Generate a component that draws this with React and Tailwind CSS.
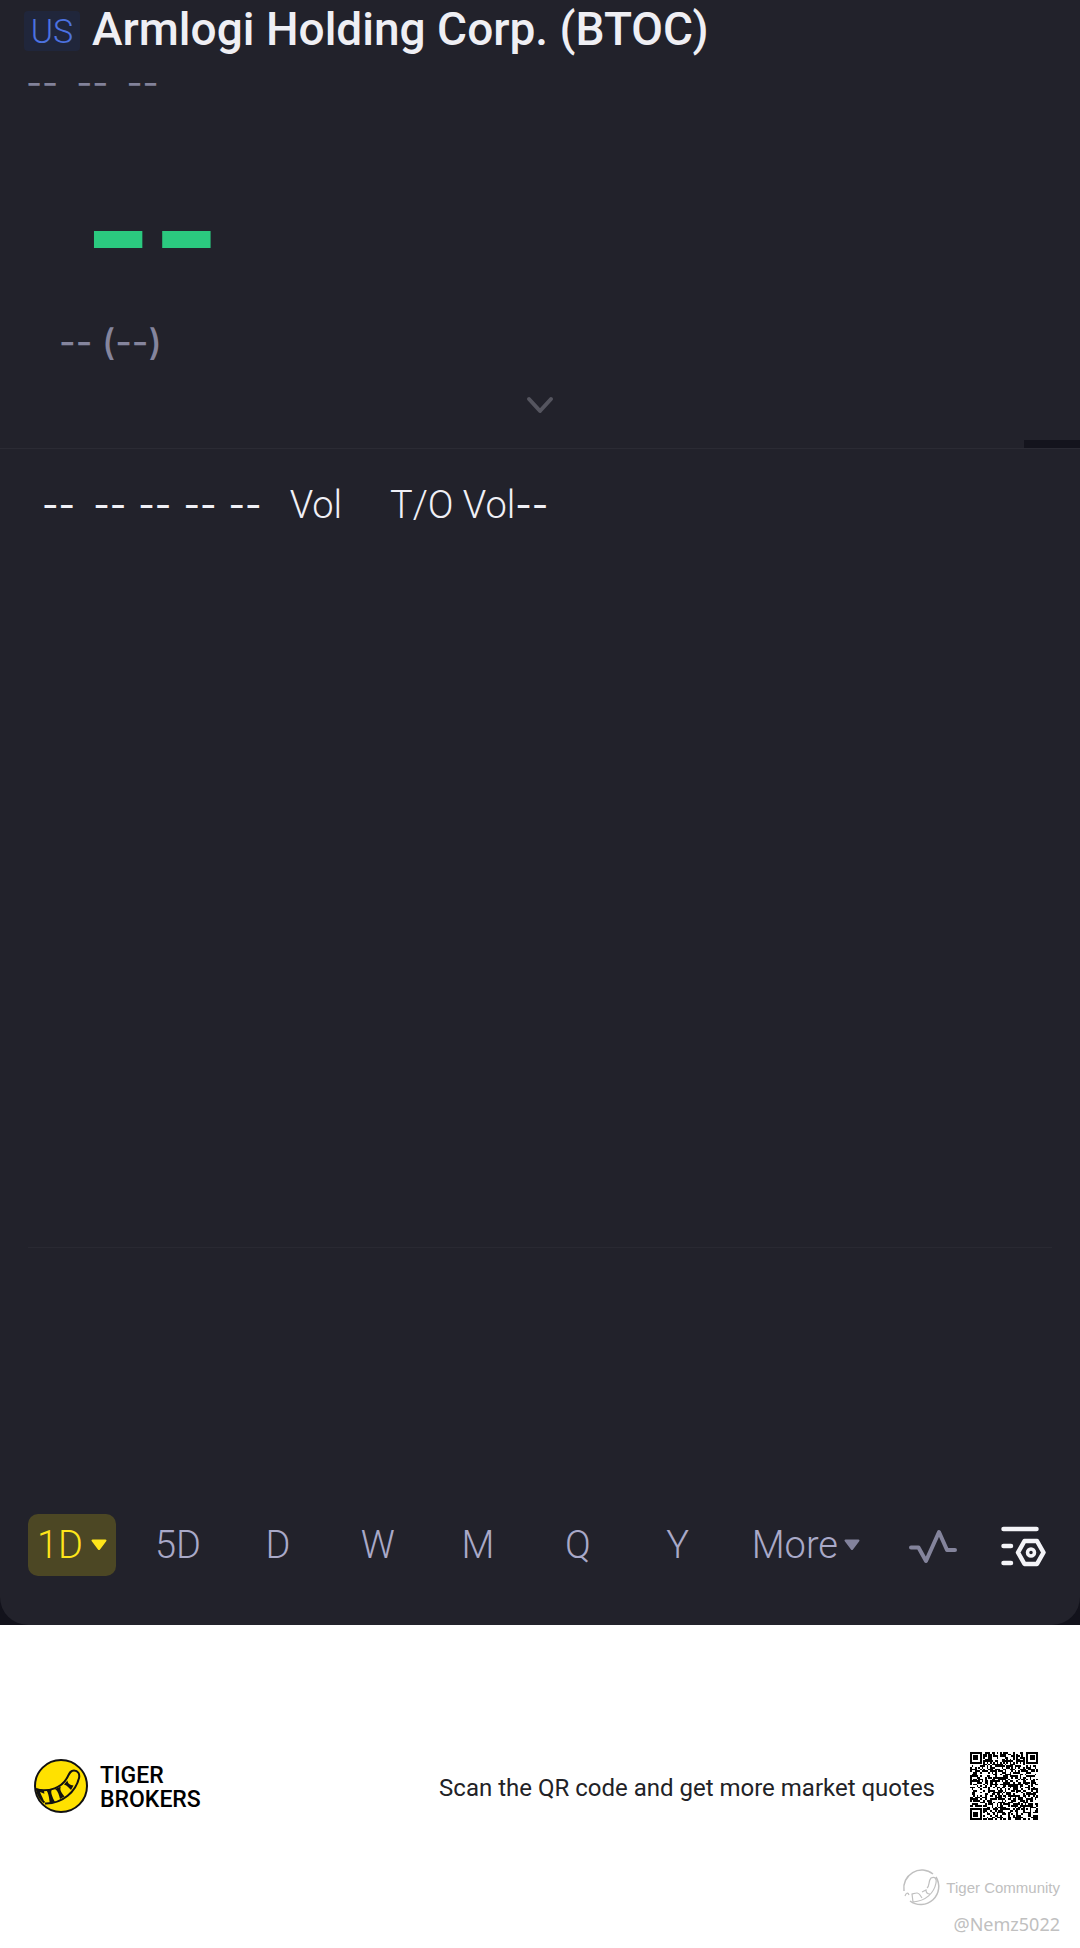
import React from "react";

const periods = ["5D", "D", "W", "M", "Q", "Y"];

const QR_SIZE = 41;

const inFinder = (x, y) => {
  const last = QR_SIZE - 8;
  return (x < 8 && y < 8) || (x >= last && y < 8) || (x < 8 && y >= last);
};

const ringCell = (dx, dy) => {
  const d = Math.max(Math.abs(dx), Math.abs(dy));
  return d <= 1 || d === 3;
};

const isDark = (x, y) => {
  if (inFinder(x, y)) {
    const cx = x < 8 ? 3 : QR_SIZE - 4;
    const cy = y < 8 ? 3 : QR_SIZE - 4;
    return ringCell(x - cx, y - cy);
  }
  if (x === 6 || y === 6) return (x + y) % 2 === 0;
  const d = Math.max(Math.abs(x - 34), Math.abs(y - 34));
  if (d <= 2) return d !== 1;
  const n = Math.sin(x * 12.9898 + y * 78.233) * 43758.5453;
  return n - Math.floor(n) > 0.48;
};

const qrPath = (() => {
  let d = "";
  for (let y = 0; y < QR_SIZE; y++) {
    for (let x = 0; x < QR_SIZE; x++) {
      if (isDark(x, y)) d += `M${x} ${y}h1v1h-1z`;
    }
  }
  return d;
})();

const Caret = ({ className }) => (
  <svg viewBox="0 0 16 12" className={className} fill="currentColor" aria-hidden="true">
    <path d="M1.6 0.5h12.8c1 0 1.4 1 .8 1.700L9 10.500c-.6.700-1.400.700-2 0L.8 2.200C.2 1.500.6.500 1.600.500z" />
  </svg>
);

const TigerLogo = ({ className }) => (
  <svg viewBox="0 0 54 54" className={className} aria-hidden="true">
    <circle cx="27" cy="27" r="26" fill="#ffe100" stroke="#111" strokeWidth="2" />
    <path
      d="M2.500 30.500C15 33 28 29 33.500 18c2-4 3-6.500 6.500-6.500 4 0 6 3.500 5 7.500C42 32 29 45 11 44.500"
      fill="none"
      stroke="#111"
      strokeWidth="2"
    />
    <path d="M2 29l8 2.500 1 11-1 2C5 40 2 35 2 29z" fill="#111" />
    <path d="M6 33l4 9 2 1-1-8z" fill="#ffe100" />
    <path d="M12 31l6-.5c-2 2 .5 8 3 12.500l-5 1.500C15 40 15 34 12 31zM21 30l6-2.500c-2 3 1 7 3.500 10L26 40c-1-4-2-8-5-10zM30 25.500l3.500-4c0 3 2.500 4.500 6 5L37 31c-2-2-3.500-4.500-7-5.500z" fill="#111" />
  </svg>
);

const TigerOutline = ({ className }) => (
  <svg viewBox="0 0 40 40" className={className} fill="none" stroke="currentColor" aria-hidden="true">
    <path d="M2 23A18 18 0 0 1 31 6" strokeWidth="1.500" />
    <path d="M34 9A18 18 0 0 1 8 33" strokeWidth="1.500" />
    <path d="M3 28c1-3 3-4 4-1M11 34l-1-8c4-1 6-2 8 1l2 3M20 24l4-2c0 2 1 4 4 4M25 20c3-2 1-7 4-10 4-2 6 1 5 5-2 10-10 18-23 19" strokeWidth="1.200" />
  </svg>
);

const App = () => {
  return (
    <main className="w-full bg-white font-['Roboto',sans-serif]">
      <div className="bg-[#12121b]">
        <div className="rounded-b-[28px] bg-[#22222b]">
          {/* Quote header */}
          <header className="h-[440px]">
            <div className="flex items-center pl-6 pt-1">
              <span className="mt-1 flex h-10 w-14 items-center justify-center rounded bg-[#20263b] text-[34px] font-light leading-10 text-[#4c72e0]">
                US
              </span>
              <h1 className="ml-3 text-[46px] font-medium leading-[50px] text-[#efeff4]">
                Armlogi Holding Corp. (BTOC)
              </h1>
            </div>
            <div className="mt-2 flex gap-[18px] pl-[26px] font-['Inter',sans-serif] text-[35px] leading-10 text-[#82829a]">
              <span>--</span>
              <span>--</span>
              <span>--</span>
            </div>
            <div className="mt-12 pl-[84px] font-['Inter',sans-serif] text-[146px] font-bold leading-[160px] text-[#2bc97f]">
              --
            </div>
            <div className="mt-2 pl-[59px] font-['Inter',sans-serif] text-[36px] font-medium leading-[48px] text-[#85859d]">
              -- (--)
            </div>
            <button type="button" aria-label="Show details" className="mx-auto mt-[30px] block text-[#55555f]">
              <svg viewBox="0 0 28 18" className="h-[18px] w-7" fill="none" stroke="currentColor" strokeWidth="4" strokeLinecap="round" strokeLinejoin="round">
                <path d="M3 3l11 12L25 3" />
              </svg>
            </button>
          </header>
          <div className="ml-auto h-2 w-14 bg-[#14141d]" />

          {/* Chart */}
          <section className="border-t border-[#2b2b34]">
            <div className="flex items-center pl-[42px] pt-[30px] text-[38px] font-light leading-[52px] text-[#f0f0f6]">
              <div className="flex gap-3 font-['Inter',sans-serif] text-[36px] font-normal">
                <span className="mr-1.5">--</span>
                <span>--</span>
                <span>--</span>
                <span>--</span>
                <span>--</span>
              </div>
              <span className="ml-7">Vol</span>
              <span className="ml-12">T/O Vol</span>
              <span className="font-['Inter',sans-serif] text-[36px] font-normal">--</span>
            </div>
            <div className="mx-7 h-[717px] border-b border-[#292932]" />
            <div className="h-[266px]" />
          </section>

          {/* Period tabs */}
          <nav className="flex items-center pb-[49px] pl-7 pr-[34px] text-[38px] font-light leading-[62px] text-[#a9a9c8]">
            <button type="button" className="flex h-[62px] w-22 items-center justify-center gap-2 rounded-[10px] bg-[#4c4724] text-[#ffe51a]">
              1D
              <Caret className="h-3 w-4" />
            </button>
            <div className="ml-3 grid flex-1 grid-cols-6">
              {periods.map((period) => (
                <button key={period} type="button">
                  {period}
                </button>
              ))}
            </div>
            <button type="button" className="ml-6 flex items-center gap-1.5">
              More
              <Caret className="h-3 w-4 text-[#82829c]" />
            </button>
            <button type="button" aria-label="Indicators" className="ml-12 pt-1 text-[#84849c]">
              <svg viewBox="0 0 50 36" className="h-9 w-[50px]" fill="none" stroke="currentColor" strokeWidth="4" strokeLinecap="round" strokeLinejoin="round">
                <path d="M3 18.500h7.500L18 32 31 3l8 18h8" />
              </svg>
            </button>
            <button type="button" aria-label="Chart settings" className="ml-[42px] pt-1 text-[#f4f4f8]">
              <svg viewBox="0 0 46 42" className="h-[42px] w-[46px]" fill="none" stroke="currentColor" strokeWidth="4.500" strokeLinecap="round" strokeLinejoin="round">
                <path d="M3.500 3h33M3.500 20h7.500M3.500 37h7.500M24.500 15h12.500l6.500 11.500L37 38H24.500L18 26.500z" />
                <circle cx="31" cy="26.500" r="3.500" strokeWidth="3.500" />
              </svg>
            </button>
          </nav>
        </div>
      </div>

      {/* Footer */}
      <footer className="px-[34px] pt-[127px] text-black">
        <div className="flex items-center pr-2">
          <TigerLogo className="size-[54px]" />
          <div className="ml-3 pt-1 text-[23px] font-medium leading-6">
            TIGER
            <br />
            BROKERS
          </div>
          <p className="ml-auto pt-1 text-[24px] leading-8 text-[#222226]">Scan the QR code and get more market quotes</p>
          <svg viewBox="0 0 41 41" className="ml-[35px] size-[68px]" shapeRendering="crispEdges" role="img" aria-label="QR code">
            <path d={qrPath} />
          </svg>
        </div>
        <div className="-mr-3.5 mt-12 flex flex-col items-end pb-2 text-[#c0c0c0]">
          <div className="flex items-center gap-1">
            <TigerOutline className="size-10" />
            <span className="font-['Liberation_Sans',sans-serif] text-[15px] leading-10">Tiger Community</span>
          </div>
          <span className="font-['Noto_Sans',sans-serif] text-[18px] leading-8">@Nemz5022</span>
        </div>
      </footer>
    </main>
  );
};

export default App;
